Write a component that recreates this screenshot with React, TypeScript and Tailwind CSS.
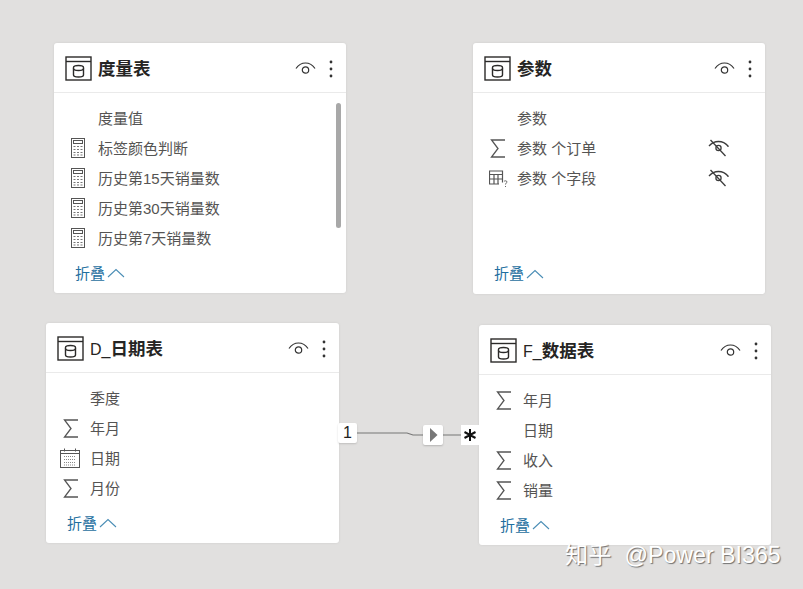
const cjk = "font-['Liberation_Sans','Noto_Sans_CJK_SC',sans-serif]";

type IconName = "none" | "calc" | "sigma" | "calendar" | "param";

function TableIcon() {
  return (
    <svg width="27" height="25" viewBox="0 0 27 25" fill="none" stroke="#2b2a29" strokeWidth="1.4">
      <rect x="1" y="1" width="25" height="23" />
      <path d="M1 5.5H26" />
      <path d="M8.500 11.500c0-1.300 2.200-2 5-2s5 .7 5 2v7.500c0 1.300-2.200 2-5 2s-5-.7-5-2z" />
      <path d="M8.500 12.500c0 1.200 2.200 2 5 2s5-.8 5-2" />
    </svg>
  );
}

function EyeIcon() {
  return (
    <svg width="21" height="13" viewBox="0 0 21 13" fill="none" stroke="#333" strokeWidth="1.2">
      <path d="M1 6.500C3.500 2.800 6.800 1 10.500 1s7 1.800 9.500 5.500" />
      <circle cx="10.500" cy="8" r="3.200" />
    </svg>
  );
}

function Dots() {
  return (
    <svg width="4" height="18" viewBox="0 0 4 18" fill="#333">
      <circle cx="2" cy="2" r="1.400" />
      <circle cx="2" cy="9" r="1.400" />
      <circle cx="2" cy="16" r="1.400" />
    </svg>
  );
}

function HiddenEye() {
  return (
    <svg width="21" height="18" viewBox="0 0 21 18" fill="none" stroke="#3c3c3c" strokeWidth="1.300">
      <path d="M1 7C3.500 4 6.500 2.500 10.500 2.500S17.500 4 20 7v1" />
      <circle cx="10.500" cy="9" r="2.600" />
      <path d="M2.500 1L17.500 17" />
    </svg>
  );
}

const iconPad: Record<IconName, string> = {
  none: "pr-[13px]",
  calc: "pr-[13px]",
  sigma: "pr-[11px]",
  calendar: "pr-[10px]",
  param: "pr-[9px]",
};

function FieldIcon({ name }: { name: IconName }) {
  if (name === "calc") {
    return (
      <svg width="14" height="20" viewBox="0 0 14 20" fill="none" stroke="#555" strokeWidth="1">
        <rect x="0.500" y="0.500" width="13" height="19" />
        <rect x="2.500" y="2.500" width="9" height="3" />
        <path d="M2.500 8.500h2M6 8.500h2M9.500 8.500h2M2.500 11.500h2M6 11.500h2M9.500 11.500h2M2.500 14.500h2M6 14.500h2M9.500 14.500h2M2.500 17h2M6 17h2M9.500 17h2" strokeWidth="1.200" stroke="#777" />
      </svg>
    );
  }
  if (name === "sigma") {
    return (
      <svg width="16" height="19" viewBox="0 0 16 19" fill="none" stroke="#555" strokeWidth="1.300">
        <path d="M15 1H1.500L8 9.500L1.500 18H15" />
      </svg>
    );
  }
  if (name === "calendar") {
    return (
      <svg width="20" height="20" viewBox="0 0 20 20" fill="none" stroke="#555" strokeWidth="1">
        <rect x="0.500" y="2.500" width="19" height="17" />
        <path d="M0.500 5.500h19M4.500 0.500v3M15.500 0.500v3" />
        <path d="M4 8.500h12M4 11.500h12M4 14.500h12M4 17h12" stroke="#888" strokeWidth="1.200" strokeDasharray="1 1" />
      </svg>
    );
  }
  if (name === "param") {
    return (
      <svg width="19" height="17" viewBox="0 0 19 17" fill="none" stroke="#555" strokeWidth="1.200">
        <path d="M13.500 12.500V1H0.500v13H10" />
        <path d="M0.500 4.500h13M5 4.500V14M9 4.500V14M0.500 9h13" />
        <path d="M15 11.500c.5-1 3-1 3 .5 0 1-1.500 1-1.500 2.500M16.500 16v1" strokeWidth="0.900" />
      </svg>
    );
  }
  return null;
}

type Row = { icon: IconName; label: string; hidden?: boolean };

function Card({ x, y, w, h, prefix, title, rows, scroll }: { x: number; y: number; w: number; h: number; prefix?: string; title: string; rows: Row[]; scroll?: boolean }) {
  return (
    <div
      className="absolute flex flex-col rounded-[3px] bg-white shadow-[0_0_3px_rgba(0,0,0,0.08)]"
      style={{ left: x, top: y, width: w, height: h }}
    >
      <div className="flex h-[50px] shrink-0 items-center border-b border-[#eaeaea] pl-[11px] pr-[13px] pt-[2px]">
        <TableIcon />
        <span className="ml-[6px] flex-1 pt-[2px] text-[17.5px] font-bold leading-none text-[#252423]">
          {prefix && <span className="text-[16px] font-normal">{prefix}</span>}
          {title}
        </span>
        <span className="mr-[1px]">
          <EyeIcon />
        </span>
        <span className="ml-[12px]">
          <Dots />
        </span>
      </div>
      <div className="flex flex-col pt-[10px]">
        {rows.map((r) => (
          <div key={r.label} className="relative flex h-[30px] items-center text-[15px] text-[#555453]">
            <span className={`flex w-[44px] shrink-0 justify-end ${iconPad[r.icon]}`}>
              <FieldIcon name={r.icon} />
            </span>
            <span className="whitespace-pre pt-[2px]">{r.label}</span>
            {r.hidden && (
              <span className="absolute left-[235px] top-[6px]">
                <HiddenEye />
              </span>
            )}
          </div>
        ))}
      </div>
      <div className="mt-auto flex h-[41px] items-center pl-[21px] text-[15px] text-[#1f6f9f]">
        <span className="pt-[2px]">折叠</span>
        <svg className="ml-[2px]" width="18" height="10" viewBox="0 0 18 10" fill="none" stroke="#4a8db5" strokeWidth="1.100">
          <path d="M1 9L9 1.500L17 9" />
        </svg>
      </div>
      {scroll && <div className="absolute left-[282px] top-[60px] h-[125px] w-[5px] rounded-[3px] bg-[#a8a8a8]" />}
    </div>
  );
}

function Connector() {
  return (
    <>
      <svg className="absolute left-[350px] top-[425px]" width="120" height="16" viewBox="0 0 120 16" fill="none" stroke="#777" strokeWidth="1.200">
        <path d="M0 8H57L63 10H115" />
      </svg>
      <div className="absolute left-[338px] top-[423px] flex h-[20px] w-[19px] items-center justify-center rounded-[2px] bg-white text-[16px] text-[#222] shadow-[0_1px_2px_rgba(0,0,0,0.15)]">
        1
      </div>
      <div className="absolute left-[423px] top-[425px] flex h-[20px] w-[20px] items-center justify-center rounded-[2px] bg-white shadow-[0_1px_2px_rgba(0,0,0,0.2)]">
        <svg width="9" height="14" viewBox="0 0 9 14" fill="#777">
          <path d="M1 0L8.500 7L1 14z" />
        </svg>
      </div>
      <div className="absolute left-[461px] top-[425px] flex h-[20px] w-[18px] items-center justify-center bg-white">
        <svg width="14" height="14" viewBox="0 0 14 14" fill="none" stroke="#111" strokeWidth="2">
          <path d="M7 1V13M1.500 4L12.500 10M12.500 4L1.500 10" />
        </svg>
      </div>
    </>
  );
}

export default function App() {
  return (
    <div className={`relative h-[589px] w-[803px] overflow-hidden bg-[#e1e0df] ${cjk}`}>
      <Card
        x={54}
        y={43}
        w={292}
        h={250}
        title="度量表"
        scroll
        rows={[
          { icon: "none", label: "度量值" },
          { icon: "calc", label: "标签颜色判断" },
          { icon: "calc", label: "历史第15天销量数" },
          { icon: "calc", label: "历史第30天销量数" },
          { icon: "calc", label: "历史第7天销量数" },
        ]}
      />
      <Card
        x={473}
        y={43}
        w={292}
        h={251}
        title="参数"
        rows={[
          { icon: "none", label: "参数" },
          { icon: "sigma", label: "参数 个订单", hidden: true },
          { icon: "param", label: "参数 个字段", hidden: true },
        ]}
      />
      <Card
        x={46}
        y={323}
        w={293}
        h={220}
        prefix="D_"
        title="日期表"
        rows={[
          { icon: "none", label: "季度" },
          { icon: "sigma", label: "年月" },
          { icon: "calendar", label: "日期" },
          { icon: "sigma", label: "月份" },
        ]}
      />
      <Card
        x={479}
        y={325}
        w={292}
        h={220}
        prefix="F_"
        title="数据表"
        rows={[
          { icon: "sigma", label: "年月" },
          { icon: "none", label: "日期" },
          { icon: "sigma", label: "收入" },
          { icon: "sigma", label: "销量" },
        ]}
      />
      <Connector />
      <div className="absolute left-[565px] top-[540px] flex gap-[13px] whitespace-pre text-[23.2px] leading-[30px] text-white [text-shadow:1px_1px_1px_rgba(0,0,0,0.5)]">
        <span>知乎</span>
        <span>@Power BI365</span>
      </div>
    </div>
  );
}
